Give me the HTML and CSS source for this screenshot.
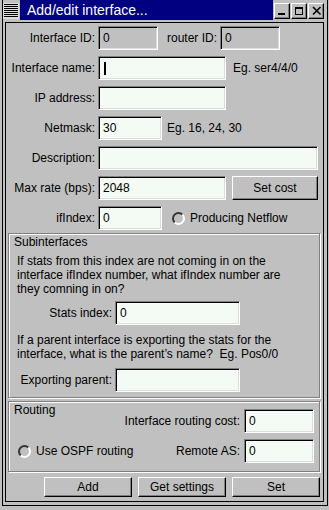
FILE: index.html
```html
<!DOCTYPE html>
<html lang="en">
<head>
<meta charset="utf-8">
<title>Add/edit interface...</title>
<link rel="stylesheet" href="styles.css">
</head>
<body>
<div class="window">
    <div class="titlebar">
        <div class="menu-btn"></div>
        <div class="title">Add/edit interface...</div>
        <div class="wm-buttons">
            <div class="wm-btn"><svg width="14" height="14" viewBox="0 0 14 14"><rect x="3" y="9" width="7" height="2" fill="#000"/></svg></div>
            <div class="wm-btn"><svg width="14" height="14" viewBox="0 0 14 14"><rect x="3.5" y="3.5" width="7" height="7" fill="none" stroke="#000"/><rect x="3" y="3" width="8" height="2" fill="#000"/></svg></div>
            <div class="wm-btn"><svg width="14" height="14" viewBox="0 0 14 14"><path d="M4 3 L11.5 10.5 M11.5 3 L4 10.5" stroke="#000" stroke-width="1.6" fill="none"/></svg></div>
        </div>
    </div>
    <div class="body">
        <div class="client">
            <div class="row">
                <span class="label">Interface ID:</span>
                <div class="entry disabled w60">0</div>
                <span class="label-inline">router ID:</span>
                <div class="entry disabled w60">0</div>
            </div>
            <div class="row">
                <span class="label">Interface name:</span>
                <div class="entry w128"><span class="caret"></span></div>
                <span class="hint">Eg. ser4/4/0</span>
            </div>
            <div class="row">
                <span class="label">IP address:</span>
                <div class="entry w128"></div>
            </div>
            <div class="row">
                <span class="label">Netmask:</span>
                <div class="entry w64">30</div>
                <span class="hint hint-near">Eg. 16, 24, 30</span>
            </div>
            <div class="row">
                <span class="label">Description:</span>
                <div class="entry w220"></div>
            </div>
            <div class="row">
                <span class="label">Max rate (bps):</span>
                <div class="entry w128">2048</div>
                <button class="button set-cost">Set cost</button>
            </div>
            <div class="row">
                <span class="label">ifIndex:</span>
                <div class="entry w64">0</div>
                <span class="radio netflow"></span>
                <span class="radio-text">Producing Netflow</span>
            </div>

            <div class="group subinterfaces">
                <div class="group-title">Subinterfaces</div>
                <p class="note">If stats from this index are not coming in on the<br>interface ifIndex number, what ifIndex number are<br>they comning in on?</p>
                <div class="sub-row">
                    <span class="sub-label">Stats index:</span>
                    <div class="entry w125">0</div>
                </div>
                <p class="note note-second">If a parent interface is exporting the stats for the<br>interface, what is the parent’s name?&nbsp; Eg. Pos0/0</p>
                <div class="sub-row export-row">
                    <span class="sub-label">Exporting parent:</span>
                    <div class="entry w125"></div>
                </div>
            </div>

            <div class="group routing">
                <div class="route-line top-line">
                    <div class="group-title">Routing</div>
                    <div class="route-row cost-row">
                        <span class="route-label">Interface routing cost:</span>
                        <div class="entry w70">0</div>
                    </div>
                </div>
                <div class="route-line">
                    <div class="ospf">
                        <span class="radio"></span>
                        <span class="radio-text">Use OSPF routing</span>
                    </div>
                    <div class="route-row">
                        <span class="route-label">Remote AS:</span>
                        <div class="entry w70">0</div>
                    </div>
                </div>
            </div>

            <div class="actions">
                <button class="button">Add</button>
                <button class="button">Get settings</button>
                <button class="button">Set</button>
            </div>
        </div>
    </div>
</div>
</body>
</html>
```

FILE: styles.css
```css
* {
    box-sizing: border-box;
}
body {
    margin: 0;
    background-color: #c0c0c0;
    font-family: "Liberation Sans", Arial, Helvetica, sans-serif;
    font-size: 12px;
    line-height: 14px;
    color: #000;
}
.window {
    margin-left: 2px;
    width: 326px;
    height: 506px;
    border: 1px solid #000;
    border-top: 0;
    background-color: #c0c0c0;
    display: flex;
    flex-direction: column;
}

/* title bar */
.titlebar {
    display: flex;
    height: 20px;
    flex: none;
}
.menu-btn {
    width: 16px;
    height: 16px;
    margin: 3px 1px 0 0;
    padding: 1px;
    background: repeating-linear-gradient(to bottom, #000 0 1px, transparent 1px 2px) content-box, #dcdcdc;
}
.title {
    flex: 1;
    background-color: #000080;
    color: #fff;
    font-size: 14px;
    line-height: 20px;
    padding-left: 7px;
}
.wm-buttons {
    display: flex;
    gap: 1px;
    padding: 3px 3px 0 1px;
}
.wm-btn {
    width: 16px;
    height: 16px;
    border: 1px solid;
    border-color: #fff #000 #000 #fff;
    box-shadow: inset -1px -1px #808080;
}
.wm-btn svg {
    display: block;
}

/* client area */
.body {
    flex: 1;
    display: flex;
    padding: 2px 3px 3px 2px;
}
.client {
    flex: 1;
    border: 1px solid #000;
}
.row {
    display: flex;
    align-items: center;
    height: 24px;
    margin-top: 6px;
}
.row:first-child {
    margin-top: 3px;
}
.label {
    width: 92px;
    padding-right: 3px;
    text-align: right;
    flex: none;
}
.label-inline {
    margin: 0 3px 0 9px;
}
.hint {
    margin-left: 7px;
}
.hint-near {
    margin-left: 5px;
}

.entry {
    height: 24px;
    flex: none;
    display: flex;
    align-items: center;
    padding: 0 4px;
    background-color: #f4fbf4;
    border: 1px solid;
    border-color: #808080 #fff #fff #808080;
    box-shadow: inset 1px 1px #000, inset -1px -1px #dcdcdc;
}
.entry.disabled {
    background-color: #c0c0c0;
}
.caret {
    display: inline-block;
    width: 2px;
    height: 13px;
    margin-left: 1px;
    background-color: #000;
}
.w60 { width: 60px; }
.w64 { width: 64px; }
.w70 { width: 70px; }
.w125 { width: 125px; }
.w128 { width: 128px; }
.w220 { width: 220px; }

.button {
    height: 20px;
    width: 88px;
    padding: 0;
    font: inherit;
    color: #000;
    background-color: #c0c0c0;
    border: 1px solid;
    border-color: #fff #000 #000 #fff;
    box-shadow: inset -1px -1px #808080;
}
.set-cost {
    width: 86px;
    height: 24px;
    margin-left: 6px;
}

.radio {
    width: 13px;
    height: 13px;
    flex: none;
    border-radius: 50%;
    border: 2px solid;
    border-color: #333 #fff #fff #333;
    background-color: #c0c0c0;
}
.netflow {
    margin-left: 10px;
}
.radio-text {
    margin-left: 5px;
    white-space: nowrap;
}

/* grouped frames */
.group {
    margin: 3px 3px 0 2px;
    padding: 1px 5px 5px 5px;
    border: 1px solid #808080;
    box-shadow: inset 1px 1px #fff, 1px 1px #fff;
}
.note {
    margin: 5px 0 0 3px;
}
.note-second {
    margin-top: 8px;
}
.sub-row {
    display: flex;
    align-items: center;
    height: 24px;
    margin-top: 5px;
}
.export-row {
    margin-top: 7px;
}
.sub-label {
    width: 101px;
    padding-right: 3px;
    text-align: right;
    flex: none;
}

.routing {
    padding-bottom: 8px;
}
.route-line {
    display: flex;
    align-items: center;
    justify-content: space-between;
}
.top-line {
    align-items: flex-start;
}
.route-row {
    display: flex;
    align-items: center;
    height: 24px;
    margin-top: 6px;
}
.route-label {
    margin-right: 4px;
}
.ospf {
    display: flex;
    align-items: center;
    margin: 6px 0 0 4px;
}

.actions {
    display: flex;
    justify-content: flex-end;
    gap: 6px;
    margin: 5px 3px 0 0;
}
```
